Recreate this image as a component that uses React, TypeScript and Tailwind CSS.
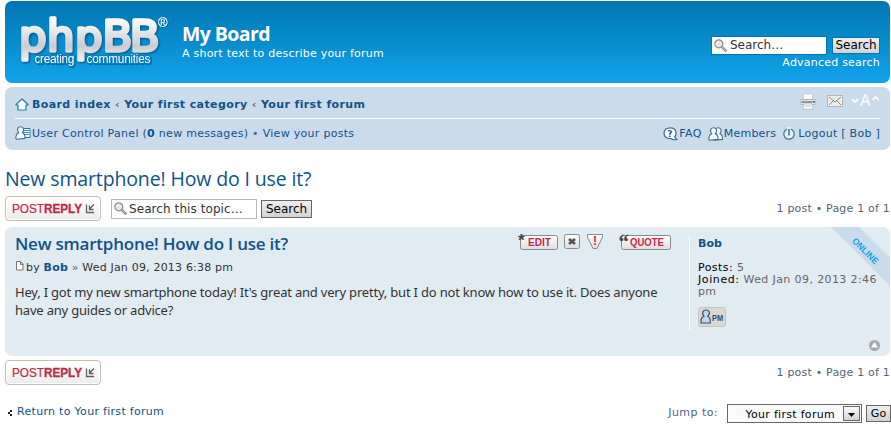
import type { ReactNode } from 'react';

const Lens = ({ className = '' }: { className?: string }) => (
  <svg className={`shrink-0 ${className}`} width="13" height="13" viewBox="0 0 13 13">
    <path d="M7.6 7.6 L11.6 11.6" stroke="#8a8a8a" strokeWidth="2.6" strokeLinecap="round" />
    <path d="M8 8 L11.4 11.4" stroke="#c4c4c4" strokeWidth="1" strokeLinecap="round" />
    <circle cx="4.8" cy="4.8" r="4" fill="#e6e6e6" stroke="#8c8c8c" strokeWidth="1.2" />
    <path d="M2.6 5 A2.4 2.4 0 0 1 5 2.6" stroke="#fff" strokeWidth="1.2" fill="none" />
  </svg>
);

const Logo = () => (
  <svg width="158" height="66" viewBox="0 0 158 66" className="block shrink-0 overflow-visible">
    <defs>
      <linearGradient id="silver" x1="0" y1="7" x2="0" y2="54" gradientUnits="userSpaceOnUse">
        <stop offset="0" stopColor="#ffffff" />
        <stop offset="0.3" stopColor="#e6e8eb" />
        <stop offset="0.62" stopColor="#c9cdd3" />
        <stop offset="1" stopColor="#f8f9fa" />
      </linearGradient>
    </defs>
    <text x="3 31 59 86.5 113.7" y="41" fontFamily="'DejaVu Sans', sans-serif" fontSize="43.5" strokeLinejoin="round" fill="url(#silver)" stroke="url(#silver)" strokeWidth="3.4" className="drop-shadow-[1px_1px_1px_#04507f]">phpBB</text>
    <g fontFamily="'Liberation Sans', Arial, sans-serif" className="drop-shadow-[1px_1px_0px_#0a6ca6]">
      <text x="142" y="17" fontSize="13" fill="#eef4f9" stroke="#eef4f9" strokeWidth="0.2">®</text>
      <g fontSize="12" fill="#fff" stroke="#0b7fc0" strokeWidth="2.4" paintOrder="stroke" strokeLinejoin="round">
        <text x="18.5" y="53" textLength="40">creating</text>
        <text x="70.5" y="53" textLength="64">communities</text>
      </g>
    </g>
  </svg>
);

const Btn = ({ children, className = '' }: { children: ReactNode; className?: string }) => (
  <button className={`shrink-0 whitespace-nowrap border bg-linear-to-b from-[#efefef] to-[#d2d2d2] text-center text-black ${className}`}>{children}</button>
);

const PostReply = () => (
  <button className="flex h-[25px] w-24 shrink-0 items-center rounded-[4px] border border-[#c3bfb8] bg-linear-to-b from-white to-[#ececec] pl-[6px] shadow-[inset_0_0_0_1px_#fff]">
    <svg width="84" height="15" viewBox="0 0 84 15">
      <g fontFamily="'Liberation Sans', Arial, sans-serif" fontSize="12" fill="#bc2a4d">
        <text x="0" y="12" textLength="32" lengthAdjust="spacingAndGlyphs" stroke="#bc2a4d" strokeWidth="0.2">POST</text>
        <text x="32" y="12" textLength="38" lengthAdjust="spacingAndGlyphs" fontWeight="bold" stroke="#bc2a4d" strokeWidth="0.3">REPLY</text>
      </g>
      <path d="M74.5 3.5 V11.5 H82 M82 3.5 L77 8.5 M77.5 4.5 V8.5 H81.5" fill="none" stroke="#606060" strokeWidth="1.3" />
    </svg>
  </button>
);

const Up = 'M1 6.5 L7 1 L13 6.5 V7 H11 V12 H3 V7 H1 Z';

const UserShape = ({ x = 0 }: { x?: number }) => (
  <path transform={`translate(${x} 0)`} d="M5.5 0.8 C8.2 0.8 9.4 3.2 8.1 5.4 L7.4 6.7 C9.5 7.4 10.2 9 10 12.4 L1.5 13.2 L0.8 12.3 C0.8 9 1.7 7.5 3.7 6.7 L3 5.4 C1.8 3.2 2.9 0.8 5.5 0.8 Z" fill="#f5f9fc" stroke="#3c7296" strokeWidth="1.1" />
);

export default function App() {
  return (
    <div className="h-[426px] w-[891px] overflow-hidden bg-white pt-px pl-[5px] font-['DejaVu_Sans',Verdana,sans-serif] text-[11px] leading-[13px] text-[#536482]">
      <header className="flex h-[82px] w-[885px] rounded-[7px] bg-linear-to-b from-[#0076b1] to-[#12a3eb] text-white">
        <div className="w-[177px] shrink-0 pt-[9px] pl-[11px]"><Logo /></div>
        <div className="pt-[20px]">
          <h1 className="h-[26px] whitespace-nowrap font-['Open_Sans',sans-serif] text-[19.5px] leading-[26px] font-bold tracking-[-0.6px]">My Board</h1>
          <p className="whitespace-nowrap tracking-[0.23px]">A short text to describe your forum</p>
        </div>
        <div className="mr-[10px] ml-auto pt-[35px]">
          <div className="flex h-[19px] gap-[5px]">
            <div className="flex h-[19px] w-[116px] items-center border border-[#0075b0] bg-white pl-[2px] text-[12px] text-[#333]">
              <Lens className="mr-[3px]" />Search…
            </div>
            <Btn className="mt-px h-[17px] w-[48px] border-[#0075b0] text-[12px] leading-[15px]">Search</Btn>
          </div>
          <p className="mt-px text-right text-[11px] tracking-[0.22px]">Advanced search</p>
        </div>
      </header>

      <nav className="mt-1 h-[63px] w-[885px] rounded-[7px] bg-[#cadceb] px-[10px] text-[#105289]">
        <div className="flex h-8 items-center border-b border-white pt-1">
          <svg width="14" height="13" viewBox="0 0 14 13" className="mr-[3px]"><path d={Up} fill="#fff" stroke="#1880b5" strokeWidth="1.2" strokeLinejoin="round" /></svg>
          <div className="whitespace-nowrap font-bold tracking-[0.39px]">Board index <span className="text-[#536482]">‹</span> Your first category <span className="text-[#536482]">‹</span> Your first forum</div>
          <div className="mr-[8px] mb-[7px] ml-auto flex items-center">
            <svg width="16" height="17" viewBox="0 0 16 17">
              <rect x="3.5" y="1" width="9" height="6" fill="#fff" stroke="#cbd1d6" />
              <rect x="0.5" y="6" width="15" height="6" rx="1" fill="#b0b3b6" />
              <path d="M1 7.5 H15 M1 10.5 H15" stroke="#e1e3e5" />
              <path d="M2 9 H12" stroke="#77797c" /><rect x="13" y="8" width="2" height="1.5" fill="#2588c8" />
              <path d="M4 11 H12 L13 16 H3 Z" fill="#fff" stroke="#b9bfc4" strokeWidth="0.8" /><path d="M5 13 H11" stroke="#b5c7d6" />
            </svg>
            <svg width="16" height="12" viewBox="0 0 16 12" className="ml-[11px]">
              <rect x="0.5" y="0.5" width="15" height="11" fill="#ededed" stroke="#b4b4b4" />
              <path d="M2 2 L8 7 L14 2 M2 10 L6 6 M14 10 L10 6" fill="none" stroke="#7b7b7b" strokeWidth="0.9" />
            </svg>
          </div>
          <svg width="30" height="24" viewBox="0 -5 30 24" className="mb-[7px] -ml-[1px]">
            <path d="M2 5 L5 8 L8 5 M22.5 6 L25.5 3 L28.5 6" fill="none" stroke="#fff" strokeWidth="1.7" />
            <text x="10" y="12" fontFamily="'Open Sans', sans-serif" fontSize="16" fill="#fff" textLength="10.5" lengthAdjust="spacingAndGlyphs">A</text>
          </svg>
        </div>
        <div className="flex h-[29px] items-center">
          <svg width="17" height="15" viewBox="0 0 17 15">
            <path d="M8 2.5 H15 V11.5 H8 Z" fill="#fff" stroke="#2579b0" /><path d="M9 4.5 H14 M9 6.5 H14 M9 8.5 H14" stroke="#3b88bd" />
            <UserShape />
          </svg>
          <div className="whitespace-nowrap tracking-[0.29px]">User Control Panel (<b>0</b> new messages) <span className="text-[#536482]">•</span> View your posts</div>
          <div className="ml-auto flex items-center whitespace-nowrap">
            <svg width="16" height="14" viewBox="0 0 16 14">
              <path d="M7 0.8 C10.5 0.8 13 2.6 13 5.9 C13 7.8 12.8 8.8 11.6 9.8 L14 12.5 C11.5 13 9.5 12.8 8 11.5 C3.5 11.8 1 9.5 1 6.2 C1 3 3.5 0.8 7 0.8 Z" fill="#fff" stroke="#336d94" strokeWidth="1.2" />
              <text x="4.2" y="9.8" fontFamily="'DejaVu Sans', sans-serif" fontWeight="bold" fontSize="9" fill="#25658f">?</text>
            </svg>
            <span className="tracking-[0.4px]">FAQ</span>
            <svg width="16" height="14" viewBox="0 0 16 14" className="ml-[6px]"><UserShape x={4.5} /><UserShape /></svg>
            <span className="tracking-[0.2px]">Members</span>
            <svg width="14" height="14" viewBox="0 0 14 14" className="mr-[2px] ml-[6px]">
              <circle cx="7" cy="7" r="5.2" fill="#e9f1f7" stroke="#417797" strokeWidth="1.3" />
              <path d="M7 0 V5" stroke="#e9f1f7" strokeWidth="3.6" /><path d="M7 2 V8.5" stroke="#2f719e" strokeWidth="1.5" />
            </svg>
            <span className="tracking-[0.27px]">Logout [ Bob ]</span>
          </div>
        </div>
      </nav>

      <h2 className="mt-[15px] h-[31px] whitespace-nowrap font-['Open_Sans',sans-serif] text-[19.5px] leading-[28px] tracking-[-0.14px] text-[#105289]">New smartphone! How do I use it?</h2>

      <div className="flex h-[25px] w-[885px] items-center">
        <PostReply />
        <div className="ml-[10px] flex h-5 w-[146px] shrink-0 items-center whitespace-nowrap border border-[#b4bac0] bg-white pl-[2px] text-[12px] tracking-[0.08px] text-[#333]"><Lens className="mr-[2px]" /><span className="pt-px">Search this topic…</span></div>
        <Btn className="ml-1 h-[18px] w-[51px] border-[#666] text-[12px] leading-[16px]">Search</Btn>
        <p className="ml-auto tracking-[0.2px]">1 post • Page 1 of 1</p>
      </div>

      <article className="relative mt-[6px] flex h-[129px] w-[885px] overflow-hidden rounded-[7px] bg-[#e1ebf2]">
        <div className="w-[684px] shrink-0 pt-[6px] pl-[10px]">
          <div className="flex h-[27px]">
            <h3 className="whitespace-nowrap font-['Open_Sans',sans-serif] text-[17px] leading-[22px] font-semibold tracking-[-0.22px] text-[#105289]">New smartphone! How do I use it?</h3>
            <svg width="164" height="28" viewBox="-4 -4 164 28" className="-mt-1 mr-[15px] ml-auto">
              <defs><linearGradient id="key" x1="0" y1="0" x2="0" y2="1"><stop stopColor="#fff" /><stop offset="1" stopColor="#dedede" /></linearGradient></defs>
              <g fill="url(#key)" stroke="#898989">
                <rect x="6.5" y="2.5" width="37" height="14" rx="2" />
                <rect x="50.5" y="1.5" width="15" height="14" rx="2" />
                <path d="M73.5 1.5 H88.5 V4 L83 15.5 H79 L73.5 4 Z" />
                <rect x="107.5" y="2.5" width="49" height="14" rx="2" />
              </g>
              <path d="M55 6 L61 11 M61 6 L55 11" stroke="#555" strokeWidth="2.8" />
              <g fontFamily="'Liberation Sans', Arial, sans-serif" fontWeight="bold" fontSize="10.5">
                <text x="14" y="13.2" textLength="23" lengthAdjust="spacingAndGlyphs" fill="#c42850">EDIT</text>
                <text x="116" y="13.2" textLength="34" lengthAdjust="spacingAndGlyphs" fill="#c42850">QUOTE</text>
                <text x="79" y="12" fontSize="12" fill="#c42850">!</text>
                <text x="4" y="13" fontSize="17" fill="#444">*</text>
                <text x="104.5" y="15.5" fontSize="21" fill="#444" fontFamily="'Liberation Serif', serif">“</text>
              </g>
            </svg>
          </div>
          <div className="flex h-[14px] items-center whitespace-nowrap text-[#333]">
            <svg width="11" height="12" viewBox="0 0 11 12" className="mb-[2px]"><path d="M1.5 1.5 H5.5 L8 4 V10 H1.5 Z M5.5 1.5 V4.5 H8" fill="#fff" stroke="#777" /></svg>
            <span className="text-[11px] tracking-[0.19px]">by <b className="text-[#105289]">Bob</b> <span className="text-[#536482]">»</span> Wed Jan 09, 2013 6:38 pm</span>
          </div>
          <p className="mt-[9px] whitespace-nowrap font-['Noto_Sans',sans-serif] text-[13px] leading-[18px] tracking-[-0.2px] text-[#333]">Hey, I got my new smartphone today! It's great and very pretty, but I do not know how to use it. Does anyone<br />have any guides or advice?</p>
        </div>
        <aside className="mt-[10px] h-[93px] w-[201px] border-l border-white pl-[8px] text-[#666]">
          <p className="font-bold text-[#105289]">Bob</p>
          <p className="mt-[12px] whitespace-nowrap leading-[12px] tracking-[0.45px]"><span className="text-black">Posts:</span> 5</p>
          <p className="whitespace-nowrap leading-[12px] tracking-[0.39px]"><span className="tracking-[0.6px] text-black">Joined:</span> Wed Jan 09, 2013 2:46<br />pm</p>
          <svg width="28" height="20" viewBox="0 0 28 20" className="mt-[9px]">
            <rect x="0.5" y="0.5" width="27" height="19" rx="2" fill="#dad8d5" stroke="#c6c3bf" />
            <path d="M8 3 C11.2 3 12.4 6 10.5 8.2 L9.7 9.3 C12 10.2 12.7 12 12.2 16 H3 C2.6 12 3.7 10.2 6 9.3 L5.3 8.2 C3.8 6 5 3 8 3 Z" fill="#c1d5eb" stroke="#344f72" strokeWidth="1.2" />
            <text x="14" y="13.5" fontFamily="'Liberation Sans', sans-serif" fontSize="9" fontWeight="bold" fill="#2e4a6e" textLength="11" lengthAdjust="spacingAndGlyphs">PM</text>
          </svg>
        </aside>
        <svg width="59" height="59" viewBox="0 0 59 59" className="absolute top-0 right-0">
          <path d="M0 0 H28 L59 31 V59 Z" fill="#cadceb" />
          <text transform="translate(20.5 14.5) rotate(45)" fontFamily="'Liberation Sans', Arial, sans-serif" fontSize="9" fontWeight="bold" fill="#12a3eb" textLength="33" lengthAdjust="spacingAndGlyphs">ONLINE</text>
        </svg>
        <svg width="11" height="11" viewBox="0 0 11 11" className="absolute right-[10px] bottom-[5px]"><circle cx="5.5" cy="5.5" r="5.5" fill="#a5a9ad" /><path d="M5.5 2 L9 7.5 H2 Z" fill="#fff" /></svg>
      </article>

      <div className="mt-1 flex h-[25px] w-[885px] items-center"><PostReply /><p className="ml-auto tracking-[0.2px]">1 post • Page 1 of 1</p></div>

      <footer className="mt-[19px] flex h-[19px] w-[886px] items-center whitespace-nowrap">
        <svg width="12" height="9" viewBox="0 0 12 9" className="mb-[3px]"><path d="M3 4h2v2H3zM5 2h2v2H5zM5 6h2v2H5z" fill="#222" /></svg>
        <a className="mb-[5px] tracking-[0.3px] text-[#105289]">Return to Your first forum</a>
        <span className="mr-[9px] mb-[3px] ml-auto tracking-[0.45px]">Jump to:</span>
        <div className="flex h-[19px] w-[135px] items-center justify-end border border-[#666] bg-[#fafafa] pr-px text-black">
          <span className="mt-px mr-[8px] tracking-[0.3px]">Your first forum</span>
          <span className="flex h-[15px] w-[17px] items-end justify-center border border-[#666] bg-linear-to-b from-[#fafafa] to-[#d2d2d2] pb-[3px]"><svg width="7" height="4" viewBox="0 0 7 4"><path d="M0 0H7L3.5 4Z" /></svg></span>
        </div>
        <Btn className="ml-1 h-[17px] w-[25px] border-[#666] text-[11px] leading-[15px]">Go</Btn>
      </footer>
    </div>
  );
}
